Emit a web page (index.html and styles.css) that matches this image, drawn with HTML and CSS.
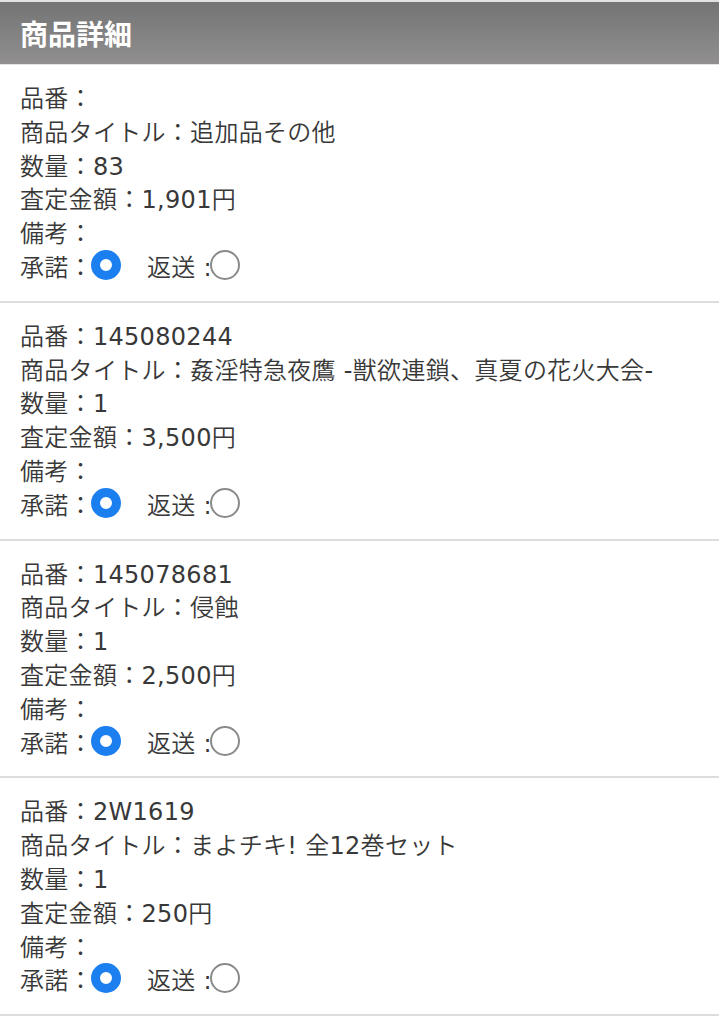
FILE: index.html
```html
<!DOCTYPE html>
<html lang="ja">
<head>
<meta charset="utf-8">
<link rel="stylesheet" href="styles.css">
</head>
<body>
<header class="page-header"><h1 class="page-title">商品詳細</h1></header>
<section class="item">
  <div class="line">品番：</div>
  <div class="line">商品タイトル：追加品その他</div>
  <div class="line">数量：83</div>
  <div class="line">査定金額：1,901円</div>
  <div class="line">備考：</div>
  <div class="line">承諾：<input class="radio" type="radio" name="r1" checked><span class="gap"></span>返送<span class="sep">:</span><input class="radio" type="radio" name="r1"></div>
</section>
<section class="item">
  <div class="line">品番：145080244</div>
  <div class="line">商品タイトル：姦淫特急夜鷹 -獣欲連鎖、真夏の花火大会-</div>
  <div class="line">数量：1</div>
  <div class="line">査定金額：3,500円</div>
  <div class="line">備考：</div>
  <div class="line">承諾：<input class="radio" type="radio" name="r2" checked><span class="gap"></span>返送<span class="sep">:</span><input class="radio" type="radio" name="r2"></div>
</section>
<section class="item">
  <div class="line">品番：145078681</div>
  <div class="line">商品タイトル：侵蝕</div>
  <div class="line">数量：1</div>
  <div class="line">査定金額：2,500円</div>
  <div class="line">備考：</div>
  <div class="line">承諾：<input class="radio" type="radio" name="r3" checked><span class="gap"></span>返送<span class="sep">:</span><input class="radio" type="radio" name="r3"></div>
</section>
<section class="item">
  <div class="line">品番：2W1619</div>
  <div class="line">商品タイトル：まよチキ! 全12巻セット</div>
  <div class="line">数量：1</div>
  <div class="line">査定金額：250円</div>
  <div class="line">備考：</div>
  <div class="line">承諾：<input class="radio" type="radio" name="r4" checked><span class="gap"></span>返送<span class="sep">:</span><input class="radio" type="radio" name="r4"></div>
</section>
</body>
</html>
```
FILE: styles.css
```css
html, body {
  margin: 0;
  padding: 0;
  background: #fff;
}
body {
  font-family: "DejaVu Sans", "Noto Sans CJK JP DemiLight", "Noto Sans CJK JP", sans-serif;
  color: #383838;
}
.page-header {
  border-top: 2px solid #e2e2e2;
  border-bottom: 1px solid #e4e4e4;
  height: 62px;
  background: linear-gradient(#747474, #918f8f);
  display: flex;
  align-items: center;
  padding: 0 20px;
}
.page-title {
  margin: 0;
  color: #fff;
  font-family: "Noto Sans CJK JP", sans-serif;
  font-size: 28px;
  font-weight: 700;
  line-height: 1;
}
.item {
  padding: 18px 20px 15px;
  border-bottom: 2px solid #dddddd;
}
.line {
  font-size: 24px;
  font-weight: 400;
  letter-spacing: 0.3px;
  height: 33.8px;
  line-height: 33.8px;
  white-space: nowrap;
}
.sep {
  display: inline-block;
  margin-left: 8px;
}
.radio {
  appearance: none;
  -webkit-appearance: none;
  width: 30px;
  height: 30px;
  margin: 0 0 0 -2px;
  border-radius: 50%;
  border: 2px solid #8a8a8a;
  box-sizing: border-box;
  vertical-align: middle;
  position: relative;
  top: -4px;
  background: #fff;
}
.radio:checked {
  border: 9px solid #1c7ff0;
}
.gap {
  display: inline-block;
  width: 26px;
}
```
